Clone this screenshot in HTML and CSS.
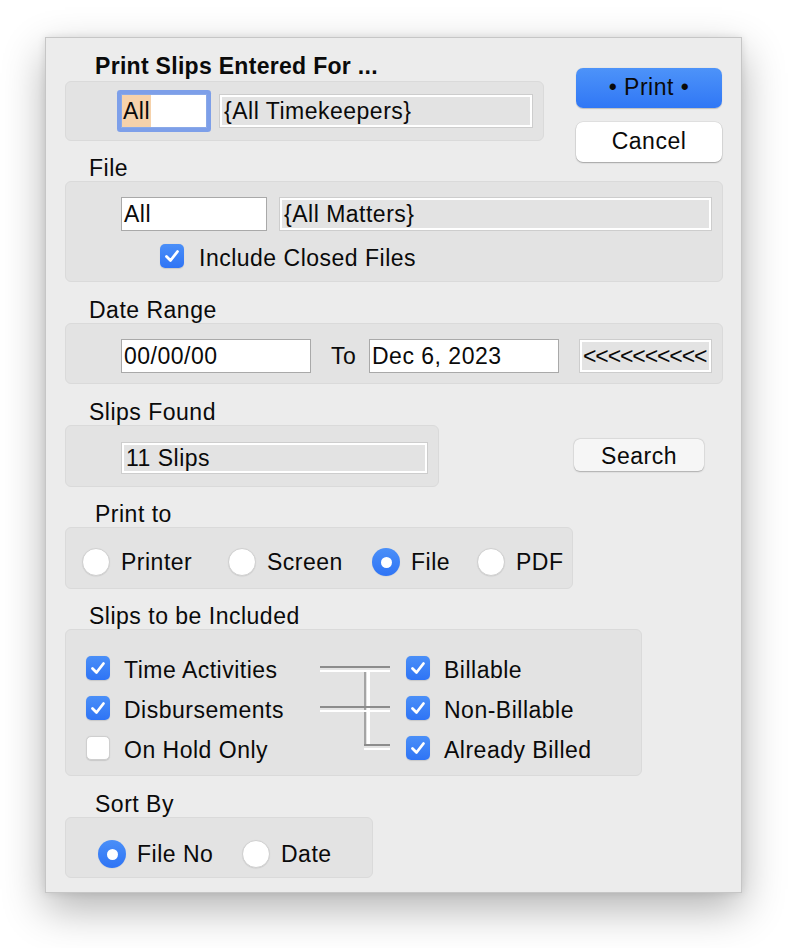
FILE: index.html
```html
<!DOCTYPE html>
<html>
<head>
<meta charset="utf-8">
<title>Print Slips</title>
<link rel="stylesheet" href="styles.css">
</head>
<body>
<div class="dialog">
  <div class="top">
    <div class="top-left">
      <div class="title">Print Slips Entered For ...</div>
      <div class="group g1">
        <div class="field focus w86"><span class="sel">All</span></div>
        <div class="field ro w314">{All Timekeepers}</div>
      </div>
    </div>
    <div class="buttons">
      <div class="btn primary">• Print •</div>
      <div class="btn cancel">Cancel</div>
    </div>
  </div>

  <div class="label ind24 m15">File</div>
  <div class="group g2">
    <div class="row gap12">
      <div class="field w146">All</div>
      <div class="field ro w433">{All Matters}</div>
    </div>
    <div class="check-row">
      <span class="cb on"><svg viewBox="0 0 24 24" width="24" height="24"><path d="M6.5 12.5 L10.5 16.5 L17.5 7.5" fill="none" stroke="#fff" stroke-width="2.8" stroke-linecap="round" stroke-linejoin="round"/></svg></span>
      <span class="cb-text">Include Closed Files</span>
    </div>
  </div>

  <div class="label ind24 m16">Date Range</div>
  <div class="group g3">
    <div class="field w190">00/00/00</div>
    <span class="to">To</span>
    <div class="field w190">Dec 6, 2023</div>
    <div class="field ro w133 arrows">&lt;&lt;&lt;&lt;&lt;&lt;&lt;&lt;&lt;&lt;</div>
  </div>

  <div class="label ind24 m16">Slips Found</div>
  <div class="found-row">
    <div class="group g4">
      <div class="field ro w307 h32">11 Slips</div>
    </div>
    <div class="btn search">Search</div>
  </div>

  <div class="label ind30 m15">Print to</div>
  <div class="group g5">
    <label class="radio-item"><span class="rb"></span><span>Printer</span></label>
    <label class="radio-item"><span class="rb"></span><span>Screen</span></label>
    <label class="radio-item"><span class="rb on"></span><span>File</span></label>
    <label class="radio-item"><span class="rb"></span><span>PDF</span></label>
  </div>

  <div class="label ind24 m15">Slips to be Included</div>
  <div class="group g6">
    <div class="inc-item c1 r1"><span class="cb on"><svg viewBox="0 0 24 24" width="24" height="24"><path d="M6.5 12.5 L10.5 16.5 L17.5 7.5" fill="none" stroke="#fff" stroke-width="2.8" stroke-linecap="round" stroke-linejoin="round"/></svg></span><span>Time Activities</span></div>
    <div class="inc-item c1 r2"><span class="cb on"><svg viewBox="0 0 24 24" width="24" height="24"><path d="M6.5 12.5 L10.5 16.5 L17.5 7.5" fill="none" stroke="#fff" stroke-width="2.8" stroke-linecap="round" stroke-linejoin="round"/></svg></span><span>Disbursements</span></div>
    <div class="inc-item c1 r3"><span class="cb"></span><span>On Hold Only</span></div>
    <svg class="connector" width="70" height="96" viewBox="0 0 70 96">
      <rect x="44" y="16" width="2" height="74" fill="#a4a4a4"/>
      <rect x="47" y="16" width="3" height="72" fill="#ffffff"/>
      <rect x="0" y="10" width="70" height="2" fill="#8c8c8c"/>
      <rect x="0" y="14" width="70" height="2" fill="#ffffff"/>
      <rect x="0" y="50" width="70" height="2" fill="#8c8c8c"/>
      <rect x="0" y="54" width="70" height="2" fill="#ffffff"/>
      <rect x="44" y="88" width="26" height="2" fill="#8c8c8c"/>
      <rect x="44" y="92" width="26" height="2" fill="#ffffff"/>
    </svg>
    <div class="inc-item c3 r1"><span class="cb on"><svg viewBox="0 0 24 24" width="24" height="24"><path d="M6.5 12.5 L10.5 16.5 L17.5 7.5" fill="none" stroke="#fff" stroke-width="2.8" stroke-linecap="round" stroke-linejoin="round"/></svg></span><span>Billable</span></div>
    <div class="inc-item c3 r2"><span class="cb on"><svg viewBox="0 0 24 24" width="24" height="24"><path d="M6.5 12.5 L10.5 16.5 L17.5 7.5" fill="none" stroke="#fff" stroke-width="2.8" stroke-linecap="round" stroke-linejoin="round"/></svg></span><span>Non-Billable</span></div>
    <div class="inc-item c3 r3"><span class="cb on"><svg viewBox="0 0 24 24" width="24" height="24"><path d="M6.5 12.5 L10.5 16.5 L17.5 7.5" fill="none" stroke="#fff" stroke-width="2.8" stroke-linecap="round" stroke-linejoin="round"/></svg></span><span>Already Billed</span></div>
  </div>

  <div class="label ind30 m16">Sort By</div>
  <div class="group g7">
    <label class="radio-item"><span class="rb on"></span><span>File No</span></label>
    <label class="radio-item"><span class="rb"></span><span>Date</span></label>
  </div>
</div>
</body>
</html>
```

FILE: styles.css
```css
html, body {
  margin: 0;
  padding: 0;
  background: #ffffff;
}
body {
  font-family: "Liberation Sans", Arial, Helvetica, sans-serif;
  font-size: 23px;
  letter-spacing: 0.5px;
  color: #0a0a0a;
  padding-top: 37px;
  padding-left: 45px;
  min-height: 948px;
  box-sizing: border-box;
}
.dialog {
  box-sizing: border-box;
  width: 697px;
  height: 856px;
  background: #ececec;
  border: 1px solid #c6c6c6;
  box-shadow: 0 16px 40px rgba(0,0,0,0.3), 0 0 8px rgba(0,0,0,0.1);
  padding: 0 18px 0 19px;
}
.top {
  display: flex;
  align-items: flex-start;
  padding-top: 15px;
}
.top-left {
  width: 479px;
}
.title {
  font-weight: bold;
  letter-spacing: 0.3px;
  line-height: 26px;
  height: 26px;
  padding-left: 30px;
}
.buttons {
  margin-left: 32px;
  margin-top: 15px;
  margin-bottom: -21px;
  width: 146px;
  display: flex;
  flex-direction: column;
  gap: 14px;
}
.btn {
  box-sizing: border-box;
  text-align: center;
  height: 40px;
  line-height: 39px;
  border-radius: 7px;
}
.btn.primary {
  background: linear-gradient(#4d93f9, #3077f5);
  box-shadow: 0 0.5px 1px rgba(0,0,0,0.2);
}
.btn.cancel {
  background: #ffffff;
  box-shadow: 0 1px 1.5px rgba(0,0,0,0.28), 0 0 0 0.5px rgba(0,0,0,0.1);
}
.btn.search {
  width: 130px;
  height: 32px;
  line-height: 35px;
  border-radius: 6px;
  background: #f6f6f6;
  box-shadow: 0 0.5px 1.5px rgba(0,0,0,0.25), 0 0 0 0.5px rgba(0,0,0,0.06);
  margin-left: 135px;
  margin-top: 14px;
}

.label {
  line-height: 25px;
  height: 25px;
}
.ind24 { padding-left: 24px; }
.ind30 { padding-left: 30px; }
.m15 { margin-top: 15px; }
.m16 { margin-top: 16px; }

.group {
  box-sizing: border-box;
  background: #e3e3e3;
  border: 1px solid #dadada;
  border-radius: 6px;
}
.g1 {
  margin-top: 2px;
  height: 60px;
  display: flex;
  align-items: center;
  gap: 12px;
  padding-left: 55px;
}
.g2 {
  height: 101px;
  padding: 15px 0 0 55px;
}
.row {
  display: flex;
}
.gap12 { gap: 12px; }
.check-row {
  display: flex;
  align-items: center;
  margin-top: 13px;
  padding-left: 39px;
  gap: 15px;
  height: 24px;
}
.cb-text {
  line-height: 25px;
  padding-top: 4px;
}
.g3 {
  height: 61px;
  padding: 15px 0 0 55px;
  display: flex;
  align-items: flex-start;
}
.to {
  width: 38px;
  margin-left: 20px;
  line-height: 34px;
}
.g3 .arrows {
  margin-left: 20px;
}
.found-row {
  display: flex;
  align-items: flex-start;
}
.g4 {
  width: 374px;
  height: 62px;
  padding: 16px 0 0 55px;
}
.g5 {
  width: 508px;
  height: 62px;
  padding: 20px 0 0 16px;
  display: grid;
  grid-template-columns: 146px 144px 105px auto;
  align-items: start;
}
.g6 {
  width: 577px;
  height: 147px;
  padding: 26px 0 0 20px;
  display: grid;
  grid-template-columns: 234px 70px 16px auto;
  grid-template-rows: 24px 24px 24px;
  row-gap: 16px;
}
.g7 {
  width: 308px;
  height: 61px;
  padding: 22px 0 0 32px;
  display: grid;
  grid-template-columns: 144px auto;
  align-items: start;
}

.field {
  box-sizing: border-box;
  height: 34px;
  line-height: 32px;
  background: #ffffff;
  border: 1px solid #a9a9a9;
  padding: 0 2px;
  white-space: nowrap;
  overflow: hidden;
}
.field.h32 { height: 32px; line-height: 30px; }
.field.ro {
  background: #e3e3e3;
  border: 1px solid #cdcdcd;
  box-shadow: inset 0 0 0 2px #ffffff;
  padding: 0 4px;
}
.field.focus {
  border: 1px solid #8aa9e8;
  border-radius: 1px;
  box-shadow: 0 0 0 4px #7d9fe9;
  padding: 0;
}
.sel {
  display: inline-block;
  background: #f6d2ab;
  padding: 0 1px;
  height: 32px;
}
.field.ro.arrows {
  letter-spacing: -1.1px;
  padding: 0 2px 0 3px;
}
.w86 { width: 86px; }
.w133 { width: 133px; }
.w146 { width: 146px; }
.w190 { width: 190px; }
.w307 { width: 307px; }
.w314 { width: 314px; }
.w433 { width: 433px; }

.cb {
  box-sizing: border-box;
  width: 24px;
  height: 24px;
  border-radius: 5px;
  background: #ffffff;
  border: 1px solid #cfcfcf;
  box-shadow: 0 0.5px 1px rgba(0,0,0,0.12);
  flex: none;
  display: block;
}
.cb.on {
  border: none;
  background: linear-gradient(#4a8ff8, #2f74f5);
}
.cb svg { display: block; }

.radio-item {
  display: flex;
  align-items: center;
  gap: 11px;
  height: 28px;
  white-space: nowrap;
}
.rb {
  box-sizing: border-box;
  width: 28px;
  height: 28px;
  border-radius: 50%;
  background: #ffffff;
  border: 1px solid #d0d0d0;
  box-shadow: 0 0.5px 1px rgba(0,0,0,0.1);
  flex: none;
  position: relative;
}
.rb.on {
  border: none;
  background: linear-gradient(#4a8ff8, #2f74f5);
}
.rb.on::after {
  content: "";
  position: absolute;
  left: 8.5px;
  top: 8.5px;
  width: 11px;
  height: 11px;
  border-radius: 50%;
  background: #ffffff;
}
.radio-item span:last-child {
  line-height: 25px;
  padding-top: 1px;
}

.inc-item {
  display: flex;
  align-items: center;
  gap: 14px;
  height: 24px;
  white-space: nowrap;
}
.inc-item span:last-child {
  line-height: 25px;
  padding-top: 4px;
}
.c1 { grid-column: 1; }
.c3 { grid-column: 4; }
.r1 { grid-row: 1; }
.r2 { grid-row: 2; }
.r3 { grid-row: 3; }
.connector {
  grid-column: 2;
  grid-row: 1 / 4;
  display: block;
}
```
